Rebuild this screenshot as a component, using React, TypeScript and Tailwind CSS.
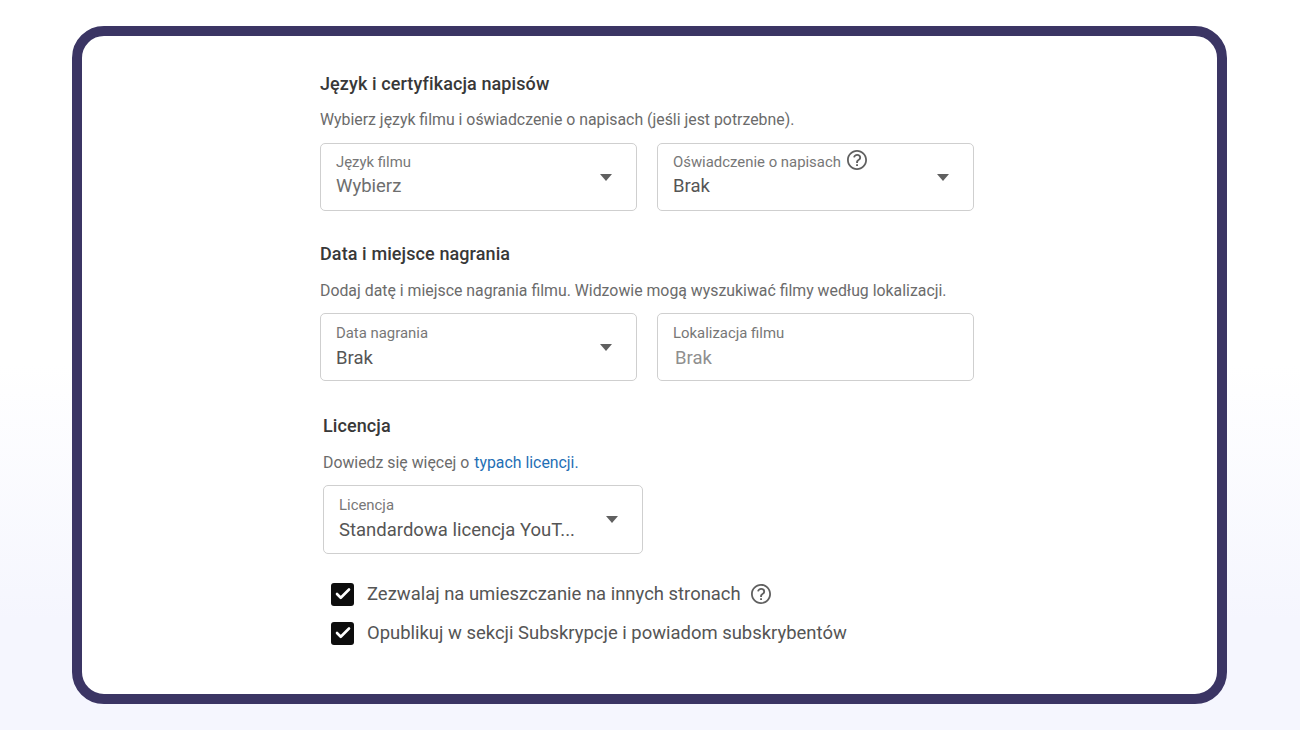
import { Check } from 'lucide-react';

function HelpIcon({ className }: { className: string }) {
  return (
    <svg viewBox="0 0 24 24" className={className} fill="#606060">
      <path d="M12 2C6.48 2 2 6.48 2 12s4.48 10 10 10 10-4.48 10-10S17.52 2 12 2zm0 18.2c-4.52 0-8.2-3.68-8.2-8.2S7.48 3.8 12 3.8s8.2 3.68 8.2 8.2-3.68 8.2-8.2 8.2z" />
      <path d="M11.1 16.2h1.9v1.9h-1.9zM12.2 6c-2.1 0-3.7 1.3-4 3.3l1.8.3c.2-1.1 1-1.8 2.2-1.8 1.2 0 2 .7 2 1.7 0 .8-.4 1.2-1.2 1.8-1.2.9-1.9 1.6-1.9 3.3v.3h1.9v-.2c0-1 .3-1.4 1.2-2.1 1.1-.8 1.9-1.6 1.9-3.2C16.1 7.4 14.5 6 12.2 6z" />
    </svg>
  );
}

function Field({
  label,
  value,
  width,
  height = 'h-[68px]',
  textBox = 'pb-[2px]',
  valueBox = 'mt-[3px] text-[#555555]',
  arrow = true,
  help = false,
}: {
  label: string;
  value: string;
  width: string;
  height?: string;
  textBox?: string;
  valueBox?: string;
  arrow?: boolean;
  help?: boolean;
}) {
  return (
    <div className={`${width} ${height} shrink-0 rounded-[5px] border border-[#cfcfcf] bg-white pl-[15px] pr-[24px] flex items-center justify-between`}>
      <div className={`min-w-0 ${textBox}`}>
        <div className="flex items-center gap-[4px] h-[20px] text-[14.9px] leading-[20px] text-[#777777]">
          {label}
          {help && <HelpIcon className="w-[24px] h-[24px] -mt-[3px]" />}
        </div>
        <div className={`text-[18.5px] leading-[24px] whitespace-nowrap ${valueBox}`}>
          {value}
        </div>
      </div>
      {arrow && <div className="w-0 h-0 border-x-[6.5px] border-x-transparent border-t-[7px] border-t-[#606060]" />}
    </div>
  );
}

function Checkbox({ label, help = false }: { label: string; help?: boolean }) {
  return (
    <div className="flex items-center h-[24px]">
      <div className="w-[23px] h-[23px] rounded-[3px] bg-[#0d0d0d] flex items-center justify-center">
        <Check className="w-[18px] h-[18px] text-white" strokeWidth={3.5} />
      </div>
      <span className="ml-[13px] text-[18.45px] leading-[24px] text-[#555555]">{label}</span>
      {help && <HelpIcon className="w-[24px] h-[24px] ml-[8px]" />}
    </div>
  );
}

export default function App() {
  return (
    <div className="h-[730px] pt-[26px] px-[72px] bg-[linear-gradient(180deg,#ffffff_0%,#ffffff_50%,#f5f6fe_85%,#f5f6fe_100%)] font-['Roboto',sans-serif]">
      <div className="w-[1155px] h-[678px] rounded-[32px] border-[10px] border-[#3b3564] bg-white pl-[238px] pt-[36px]">
        <h2 className="text-[18px] tracking-[0.1px] leading-[24px] font-medium text-[#383838]">Język i certyfikacja napisów</h2>
        <p className="mt-[13px] text-[15.85px] leading-[22px] text-[#6b6b6b]">
          Wybierz język filmu i oświadczenie o napisach (jeśli jest potrzebne).
        </p>
        <div className="mt-[12px] flex gap-[20px]">
          <Field label="Język filmu" value="Wybierz" width="w-[317px]" textBox="pb-[5px]" valueBox="mt-[2px] text-[#6e6e6e]" />
          <Field label="Oświadczenie o napisach" value="Brak" width="w-[317px]" textBox="pb-[5px]" valueBox="mt-[2px] text-[#555555]" help />
        </div>

        <h2 className="mt-[31px] text-[18px] tracking-[0.1px] leading-[24px] font-medium text-[#383838]">Data i miejsce nagrania</h2>
        <p className="mt-[14px] text-[15.85px] leading-[22px] text-[#6b6b6b]">
          Dodaj datę i miejsce nagrania filmu. Widzowie mogą wyszukiwać filmy według lokalizacji.
        </p>
        <div className="mt-[11px] flex gap-[20px]">
          <Field label="Data nagrania" value="Brak" width="w-[317px]" />
          <Field label="Lokalizacja filmu" value="Brak" width="w-[317px]" valueBox="mt-[3px] pl-[2px] text-[#8f8f8f]" arrow={false} />
        </div>

        <div className="pl-[3px]">
          <h2 className="mt-[33px] text-[18px] tracking-[0.1px] leading-[24px] font-medium text-[#383838]">Licencja</h2>
          <p className="mt-[14px] text-[15.85px] leading-[22px] text-[#6b6b6b]">
            Dowiedz się więcej o <span className="ml-[1px] text-[#1f6fb5]">typach licencji.</span>
          </p>
          <div className="mt-[11px]">
            <Field label="Licencja" value="Standardowa licencja YouT..." width="w-[320px]" height="h-[69px]" />
          </div>
          <div className="mt-[28px] pl-[8px] flex flex-col gap-[15px]">
            <Checkbox label="Zezwalaj na umieszczanie na innych stronach" help />
            <Checkbox label="Opublikuj w sekcji Subskrypcje i powiadom subskrybentów" />
          </div>
        </div>
      </div>
    </div>
  );
}
